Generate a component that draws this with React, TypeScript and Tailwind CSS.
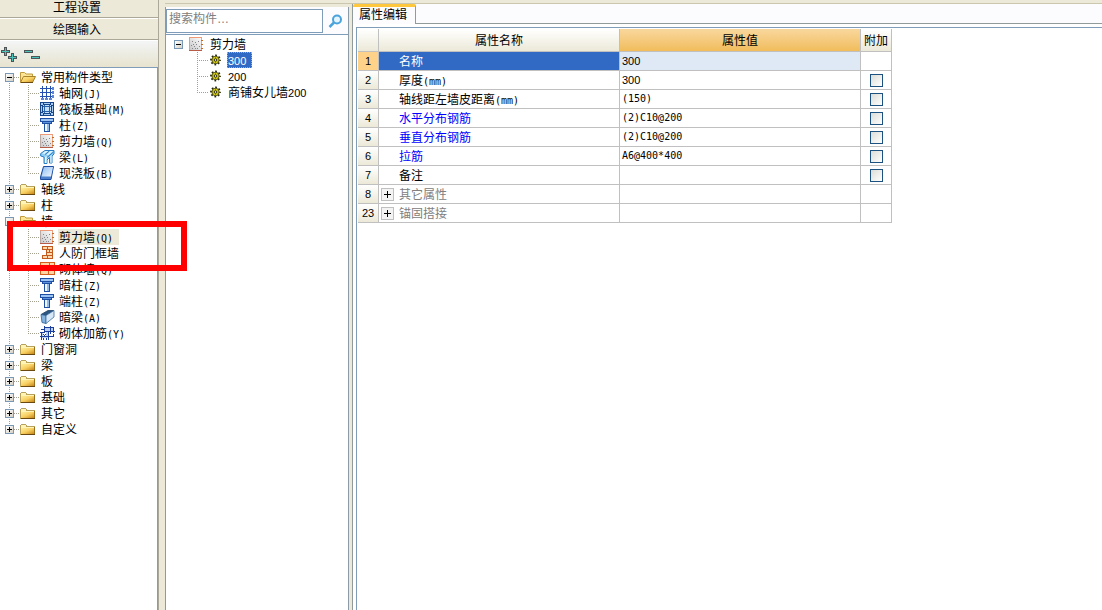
import { useState, type ReactNode } from "react";

function Text({ children }: { children: string }) {
  const parts = children.match(/[\x20-\x7e]+|[^\x20-\x7e]+/g) ?? [];
  return (
    <>
      {parts.map((part, i) => {
        if (/^\d+$/.test(part)) return <span key={i} className="font-['Liberation_Sans',sans-serif] text-[11px]">{part}</span>;
        if (/^[\x20-\x7e]+$/.test(part)) return <span key={i} className="font-['DejaVu_Sans_Mono',monospace] text-[10px]">{part}</span>;
        return <span key={i}>{part}</span>;
      })}
    </>
  );
}

function Svg({ children, smooth = false }: { children: ReactNode; smooth?: boolean }) {
  return (
    <svg viewBox="0 0 16 16" className="size-4 shrink-0" shapeRendering={smooth ? "auto" : "crispEdges"} aria-hidden="true">
      {children}
    </svg>
  );
}

const Folder = () => (
  <Svg>
    <path d="M0 4h1V3h5v1h1v1h8v9H0z" fill="#b9a25a" />
    <path d="M1 4h5v2h8v1H1z" fill="#fff3b8" />
    <path d="M1 7h13v6H1z" fill="url(#folder-face)" />
    <path d="M1 13h14v1H1z" fill="#6b4a12" />
    <path d="M14 6h1v7h-1z" fill="#96701f" />
  </Svg>
);

const FolderOpen = () => (
  <Svg smooth>
    <path d="M.5 13.500V3.500h4l1.500 1.500h6.500v2.500" fill="#fbe495" stroke="#c09a3c" />
    <path d="M3.500 7.500h12l-3 6H.5z" fill="url(#folder-face)" stroke="#a8842c" />
    <path d="M1 13.500h12" stroke="#6b4a12" />
  </Svg>
);

const AxisGrid = () => (
  <Svg>
    <path d="M2 1h1v13H2zM6 1h1v13H6zM10 1h1v13h-1zM0 3h13v1H0zM0 7h13v1H0zM0 11h13v1H0z" fill="#2450b4" />
    <path d="M12 2h2v3h-2zM12 6h2v3h-2zM12 10h2v3h-2zM1 13h3v2H1zM5 13h3v2H5zM9 13h3v2H9z" fill="#5c84d8" />
  </Svg>
);

const Raft = () => (
  <Svg>
    <path d="M0 1h14v14H0z" fill="#17458c" />
    <path d="M1 2h2v2H1zM4 2h6v1H4zM11 2h2v2h-2zM1 5h1v6H1zM12 5h1v6h-1zM1 12h2v2H1zM4 13h6v1H4zM11 12h2v2h-2z" fill="#a9cdf2" />
    <path d="M3 4h8v8H3z" fill="#c4dffa" />
    <path d="M4 4h1v8H4zM9 4h1v8H9zM3 5h8v1H3zM3 10h8v1H3z" fill="#2860aa" />
  </Svg>
);

const Column = () => (
  <Svg>
    <path d="M0 1h14v4h-2v2h-2v8H4V7H2V5H0z" fill="#1f4fa5" />
    <path d="M1 2h12v2H1z" fill="#9cc4f3" />
    <path d="M3 5h8v1H3z" fill="#5d92dc" />
    <path d="M5 7h2v7H5z" fill="#edf6ff" />
    <path d="M7 7h2v7H7z" fill="#8fbbed" />
  </Svg>
);

const Wall = () => (
  <Svg>
    <path d="M0 2h13v12H0z" fill="#b9aaa6" />
    <path d="M0 1h13v1H0z" fill="#ef9a76" />
    <path d="M1 2h11v12H1z" fill="url(#wall-face)" />
    <path d="M3 5h1v1H3zM2 9h1v1H2zM6 6h1v1H6zM5 10h1v1H5zM3 12h1v1H3zM7 8h1v1H7zM8 12h1v1H8zM9 5h1v1H9zM4 8h1v1H4zM6 12h1v1H6zM10 10h1v1h-1z" fill="#85858b" />
    <path d="M0 14h13v1H0z" fill="#b65c49" />
    <path d="M12 2h1v12h-1z" fill="#e8a583" />
    <path d="M12 4h2v1h-2zM12 8h2v1h-2zM12 12h2v1h-2z" fill="#d3661d" />
  </Svg>
);

const Beam = () => (
  <Svg smooth>
    <path d="M.7 4.500L5 1.500h9v3.500l-2 2v7H9.500V8.500L7 11v3.500H4V8L.7 7z" fill="#8fcdf2" stroke="#2a7fc4" />
    <path d="M2 4.500L5.500 2H8L5 5zM9.500 2H13L8.500 6H6.500z" fill="#dff4ff" />
    <path d="M5 8l1.500-1v7H5zM10.500 7l1-1v8h-1z" fill="#f4fcff" />
    <path d="M5 5.500L9.500 2M7 8.500L13.500 3" stroke="#2a7fc4" />
  </Svg>
);

const Slab = () => (
  <Svg smooth>
    <path d="M3.500 1.500h10l-2.500 13H.5v-2.500z" fill="#4b80cc" stroke="#1e4c9e" />
    <path d="M4 2h9l-2 9.500H1.500z" fill="url(#slab-face)" />
  </Svg>
);

const DoorFrame = () => (
  <Svg>
    <path d="M2 1h11v13H2v-4h4V5H2z" fill="#c45b1e" />
    <path d="M3 2h4v2H3zM8 2h4v2H8zM7 5h2v2H7zM10 5h2v2h-2zM7 8h5v2H7zM3 11h4v2H3zM8 11h4v2H8z" fill="#ffd8ae" />
  </Svg>
);

const Bricks = () => (
  <Svg>
    <path d="M0 1h15v13H0z" fill="#d5601e" />
    <path d="M1 2h8v3H1zM10 2h4v3h-4zM1 6h3v3H1zM5 6h6v3H5zM12 6h2v3h-2zM1 10h7v3H1zM9 10h5v3H9z" fill="#ffd5a6" />
  </Svg>
);

const HiddenBeam = () => (
  <Svg smooth>
    <path d="M1 5.500L8 1.500h6L6 6.500z" fill="#2c557f" stroke="#1f4468" strokeWidth="0.8" />
    <path d="M1 5.500l5 1v8l-4-1z" fill="#86b2de" stroke="#2c5f93" strokeWidth="0.8" />
    <path d="M6 6.500l8-5V8l-8 6.500z" fill="#d6e7f8" stroke="#3f709f" strokeWidth="0.8" />
  </Svg>
);

const Rebar = () => (
  <Svg>
    <path d="M1 4h3v1H1zM4 1h1v6H4zM4 2h10v1H4zM10 1h1v8h-1zM13 3h1v5h-1zM4 6h11v1H4zM0 7h5v1H0zM0 11h14v1H0zM1 7h1v8H1zM8 7h1v8H8zM13 9h1v3h-1zM3 9h1v1H3zM4 10h1v1H4zM5 9h1v1H5zM3 13h1v2H3zM6 13h1v2H6z" fill="#1c3f9c" />
    <path d="M2 8h1v3H2zM5 3h5v3H5zM11 3h2v3h-2zM6 7h2v4H6zM2 12h6v1H2z" fill="#b9cff5" />
  </Svg>
);

const Gear = () => (
  <Svg smooth>
    <circle cx="6.500" cy="8" r="4.400" fill="none" stroke="#26260c" strokeWidth="2" strokeDasharray="1.728 1.728" strokeDashoffset="0.864" />
    <circle cx="6.500" cy="8" r="3.700" fill="#f2ea1c" stroke="#3a3a10" strokeWidth="0.900" />
    <path d="M6.500 4.500v7M3 8h7M4.200 5.700l4.600 4.600M8.800 5.700l-4.600 4.600" stroke="#4a4a10" strokeWidth="0.600" />
    <circle cx="6.500" cy="8" r="1.200" fill="#fff" stroke="#26260c" strokeWidth="0.900" />
  </Svg>
);

type Item = { label: string; icon: ReactNode; selected?: "soft" | "strong" };

const LINE = { stroke: "#a3a08f", strokeDasharray: "1 1" };

function Leaf({ item, last, trunk }: { item: Item; last: boolean; trunk: boolean }) {
  const tone =
    item.selected === "soft"
      ? "bg-[#ece9d8]"
      : item.selected === "strong"
        ? "bg-[#316ac5] text-white outline outline-1 -outline-offset-1 outline-dotted outline-[#e0a050]"
        : "";
  return (
    <li className="flex h-4 items-center">
      <svg viewBox="0 0 40 16" className="h-4 w-10 shrink-0" shapeRendering="crispEdges" aria-hidden="true">
        {trunk && <path d="M9.5 0V16" {...LINE} />}
        <path d={last ? "M28.5 0V8" : "M28.5 0V16"} {...LINE} />
        <path d="M28 8.5H39" {...LINE} />
      </svg>
      {item.icon}
      <span className={`ml-0.5 h-4 pr-1.5 pl-px leading-4 whitespace-nowrap ${tone}`}>
        <Text>{item.label}</Text>
      </span>
    </li>
  );
}

type Position = "first" | "middle" | "last" | "alone";

function Branch({ label, icon, items = [], open: initial = false, position }: {
  label: string; icon?: ReactNode; items?: Item[]; open?: boolean; position: Position;
}) {
  const [open, setOpen] = useState(initial);
  const trunk = { first: "M9.5 8V16", middle: "M9.5 0V16", last: "M9.5 0V8", alone: "" }[position];
  return (
    <li>
      <div className="flex h-4 items-center">
        <span className="grid h-4 w-5 shrink-0">
          <svg viewBox="0 0 20 16" className="col-start-1 row-start-1 h-4 w-5" shapeRendering="crispEdges" aria-hidden="true">
            {trunk && <path d={trunk} {...LINE} />}
            {position !== "alone" && <path d="M10 8.5H19" {...LINE} />}
          </svg>
          <button
            type="button"
            aria-label={label}
            aria-expanded={open}
            onClick={() => setOpen(!open)}
            className="col-start-1 row-start-1 mt-1 ml-[5px] size-[9px] border border-[#7898b5] bg-linear-to-br from-white to-[#d6d0c4]"
          >
            <svg viewBox="0 0 7 7" className="block size-[7px]" shapeRendering="crispEdges" aria-hidden="true">
              <path d={open ? "M1 3h5v1H1z" : "M1 3h5v1H1zM3 1h1v5H3z"} />
            </svg>
          </button>
        </span>
        {icon ?? (open ? <FolderOpen /> : <Folder />)}
        <span className="ml-1 h-4 pl-px leading-4 whitespace-nowrap"><Text>{label}</Text></span>
      </div>
      {open && items.length > 0 && (
        <ul>
          {items.map((item, i) => (
            <Leaf key={item.label} item={item} last={i === items.length - 1} trunk={position === "first" || position === "middle"} />
          ))}
        </ul>
      )}
    </li>
  );
}

const COMMON: Item[] = [
  { label: "轴网(J)", icon: <AxisGrid /> },
  { label: "筏板基础(M)", icon: <Raft /> },
  { label: "柱(Z)", icon: <Column /> },
  { label: "剪力墙(Q)", icon: <Wall /> },
  { label: "梁(L)", icon: <Beam /> },
  { label: "现浇板(B)", icon: <Slab /> },
];

const WALLS: Item[] = [
  { label: "剪力墙(Q)", icon: <Wall />, selected: "soft" },
  { label: "人防门框墙", icon: <DoorFrame /> },
  { label: "砌体墙(Q)", icon: <Bricks /> },
  { label: "暗柱(Z)", icon: <Column /> },
  { label: "端柱(Z)", icon: <Column /> },
  { label: "暗梁(A)", icon: <HiddenBeam /> },
  { label: "砌体加筋(Y)", icon: <Rebar /> },
];

const MEMBERS: Item[] = [
  { label: "300", icon: <Gear />, selected: "strong" },
  { label: "200", icon: <Gear /> },
  { label: "商铺女儿墙200", icon: <Gear /> },
];

type Row = { no: number; name: string; value?: string; tone?: string; check?: boolean; group?: boolean };

const ROWS: Row[] = [
  { no: 1, name: "名称", value: "300", tone: "text-white" },
  { no: 2, name: "厚度(mm)", value: "300", check: true },
  { no: 3, name: "轴线距左墙皮距离(mm)", value: "(150)", check: true },
  { no: 4, name: "水平分布钢筋", value: "(2)C10@200", tone: "text-[#0000ff]", check: true },
  { no: 5, name: "垂直分布钢筋", value: "(2)C10@200", tone: "text-[#0000ff]", check: true },
  { no: 6, name: "拉筋", value: "A6@400*400", tone: "text-[#0000ff]", check: true },
  { no: 7, name: "备注", check: true },
  { no: 8, name: "其它属性", tone: "text-[#808080]", group: true },
  { no: 23, name: "锚固搭接", tone: "text-[#808080]", group: true },
];

function Properties() {
  const cell = "border-r border-b border-[#c0c0c0] p-0";
  const head = "h-[23px] border-r border-b border-[#c0c0c0] p-0 font-normal";
  const line = "flex h-[18px] items-center overflow-hidden leading-[18px] whitespace-nowrap";
  return (
    <table className="w-[534px] table-fixed border-separate border-spacing-0">
      <colgroup>
        <col className="w-[21px]" />
        <col className="w-[241px]" />
        <col className="w-[241px]" />
        <col className="w-[31px]" />
      </colgroup>
      <thead>
        <tr>
          <td className={`${head} bg-linear-to-b from-white to-[#ece9d8]`} />
          <th scope="col" className={`${head} bg-linear-to-b from-white to-[#ece9d8]`}>属性名称</th>
          <th scope="col" className={`${head} bg-linear-to-b from-[#f9d79c] to-[#f1bd5b]`}>属性值</th>
          <th scope="col" className={`${head} bg-linear-to-b from-white to-[#ece9d8] whitespace-nowrap`}>附加</th>
        </tr>
      </thead>
      <tbody>
        {ROWS.map((row) => (
          <tr key={row.no}>
            <td className={`${cell} ${row.no === 1 ? "bg-[#ffd28a]" : "bg-linear-to-b from-white to-[#ece9d8]"}`}>
              <div className={`${line} justify-center`}><Text>{String(row.no)}</Text></div>
            </td>
            <th scope="row" className={`${cell} text-left font-normal ${row.no === 1 ? "bg-[#316ac5]" : ""}`}>
              <div className={line}>
                <span className="flex w-5 shrink-0 pl-0.5">
                  {row.group && (
                    <button type="button" aria-label={row.name} className="size-[13px] border border-[#c0c0c0] bg-[#f4f4f4]">
                      <svg viewBox="0 0 11 11" className="block size-[11px]" shapeRendering="crispEdges" aria-hidden="true">
                        <path d="M2 5h7v1H2zM5 2h1v7H5z" />
                      </svg>
                    </button>
                  )}
                </span>
                <span className={`h-[18px] ${row.tone ?? ""}`}><Text>{row.name}</Text></span>
              </div>
            </th>
            <td className={`${cell} ${row.no === 1 ? "bg-[#dfe9f5]" : ""}`}>
              <div className={`${line} pl-0.5`}><Text>{row.value ?? ""}</Text></div>
            </td>
            <td className={cell}>
              <div className={`${line} justify-center`}>
                {row.check && (
                  <input
                    type="checkbox"
                    aria-label={`附加 ${row.name}`}
                    className="size-[13px] appearance-none border border-[#1c5180] bg-linear-to-br from-[#dcdcd7] to-white checked:bg-[#316ac5]"
                  />
                )}
              </div>
            </td>
          </tr>
        ))}
      </tbody>
    </table>
  );
}

export default function App() {
  return (
    <div className="relative flex min-h-screen bg-[#ece9d8] font-['Noto_Sans_CJK_SC',sans-serif] text-xs text-black">
      <svg className="absolute size-0" aria-hidden="true">
        <defs>
          <linearGradient id="folder-face" x1="0" y1="0" x2="1" y2="1">
            <stop offset="0" stopColor="#ffef9e" />
            <stop offset="0.5" stopColor="#f8cf62" />
            <stop offset="1" stopColor="#c88716" />
          </linearGradient>
          <linearGradient id="slab-face" x1="0" y1="0" x2="1" y2="1">
            <stop offset="0" stopColor="#8fbdf0" />
            <stop offset="1" stopColor="#f2f8ff" />
          </linearGradient>
          <linearGradient id="wall-face" x1="1" y1="0" x2="0" y2="1">
            <stop offset="0" stopColor="#fbfaf9" />
            <stop offset="1" stopColor="#c9c9ca" />
          </linearGradient>
        </defs>
      </svg>

      <aside className="flex w-[159px] shrink-0 flex-col border-r border-[#aca899]">
        <button type="button" className="h-[18px] border-b border-[#aca899] pr-1 pb-1.5 leading-[14px]">工程设置</button>
        <button type="button" className="h-[22px] border-t border-b border-t-white border-b-[#aca899] pr-1 pb-0.5 leading-5">绘图输入</button>
        <div className="flex h-[27px] items-start border-t border-white bg-linear-to-b from-[#f3f5f6] to-[#e7e3cf] pt-1.5">
          <button type="button" aria-label="展开">
            <svg viewBox="0 0 18 16" className="block h-4 w-[18px]" shapeRendering="crispEdges" aria-hidden="true">
              <path d="M4 0h3v3h3v3H7v3H4V6H1V3h3zM11 6h3v3h3v3h-3v3h-3v-3H8V9h3z" fill="#4d5558" />
              <path d="M5 1h1v7H5zM2 4h7v1H2zM12 7h1v7h-1zM9 10h7v1H9z" fill="#4bc3b9" />
            </svg>
          </button>
          <button type="button" aria-label="折叠" className="ml-1.5">
            <svg viewBox="0 0 18 16" className="block h-4 w-[18px]" shapeRendering="crispEdges" aria-hidden="true">
              <path d="M0 3h9v3H0zM7 9h9v3H7z" fill="#4d5558" />
              <path d="M1 4h7v1H1zM8 10h7v1H8z" fill="#4bc3b9" />
            </svg>
          </button>
        </div>
        <ul className="flex-1 border-t border-r border-[#7f9db9] bg-white pt-px">
          <Branch label="常用构件类型" items={COMMON} open position="first" />
          <Branch label="轴线" position="middle" />
          <Branch label="柱" position="middle" />
          <Branch label="墙" items={WALLS} open position="middle" />
          <Branch label="门窗洞" position="middle" />
          <Branch label="梁" position="middle" />
          <Branch label="板" position="middle" />
          <Branch label="基础" position="middle" />
          <Branch label="其它" position="middle" />
          <Branch label="自定义" position="last" />
        </ul>
      </aside>

      <div className="flex min-w-0 flex-1 flex-col pl-1.5">
        <div className="h-1 shrink-0 border-b border-[#cbc6ae] bg-[#ece9d8]" />
        <div className="flex flex-1">
          <section className="mt-[3px] flex w-[184px] shrink-0 flex-col border-r border-l border-r-[#8c9ba8] border-l-[#7f9db9] bg-white">
            <form className="flex h-[27px] items-start bg-[#fcfcfe] pt-0.5" onSubmit={(e) => e.preventDefault()}>
              <input
                type="text"
                aria-label="搜索构件"
                placeholder="搜索构件…"
                className="h-6 w-[157px] shrink-0 border border-[#7f9db9] bg-white px-0.5 pb-1 font-['Liberation_Sans','Noto_Sans_CJK_SC',sans-serif] placeholder:text-[#808080] placeholder:opacity-100"
              />
              <button type="submit" aria-label="搜索" className="ml-px shrink-0 p-1">
                <svg viewBox="0 0 16 16" className="size-4" aria-hidden="true">
                  <path d="M1.500 14L6 9.500" stroke="#4ba3dc" strokeWidth="2.500" />
                  <circle cx="9" cy="6.500" r="4" fill="#e4f5ff" stroke="#4ba3dc" strokeWidth="2" />
                </svg>
              </button>
            </form>
            <ul className="flex-1 border-t border-[#7f9db9] pt-px pl-[3px]">
              <Branch label="剪力墙" icon={<Wall />} items={MEMBERS} open position="alone" />
            </ul>
          </section>

          <main className="ml-[3px] flex min-w-0 flex-1 flex-col border-l border-[#919b9c] bg-white">
            <div className="flex h-5 bg-[#fcfcfe]">
              <button
                type="button"
                role="tab"
                aria-selected="true"
                className="w-[63px] rounded-t-xs border-t-[3px] border-r border-t-[#ffc73c] border-r-[#919b9c] pr-0.5 pb-1 leading-[14px] whitespace-nowrap"
              >
                属性编辑
              </button>
              <div className="flex-1 border-b border-[#919b9c]" />
            </div>
            <div className="mt-[3px] ml-[3px] flex-1 border-t border-l border-[#7f9db9] pt-px pl-px">
              <Properties />
            </div>
          </main>
        </div>
      </div>

      <div className="pointer-events-none absolute top-[221px] left-[7px] h-[50px] w-[180px] border-[6px] border-[#ff0000]" />
    </div>
  );
}
